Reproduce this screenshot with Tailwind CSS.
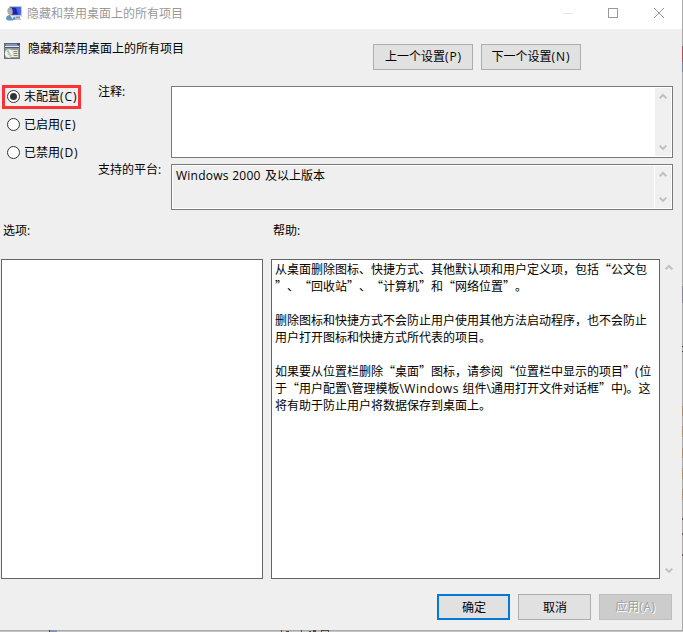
<!DOCTYPE html>
<html lang="zh-CN">
<head>
<meta charset="utf-8">
<title>隐藏和禁用桌面上的所有项目</title>
<script src="https://cdn.jsdelivr.net/npm/@tailwindcss/browser@4"></script>
</head>
<body class="w-[683px] h-[632px] overflow-hidden bg-[#d0d0d0] text-black text-[12px] leading-[17px] font-['Noto_Sans_CJK_SC',sans-serif] [text-spacing-trim:space-all]">
<svg class="hidden">
  <symbol id="up" viewBox="0 0 8 7"><path d="M.7 5.2 4 1.9l3.300 3.300" fill="none" stroke="#bfbfbf" stroke-width="2"/></symbol>
  <symbol id="down" viewBox="0 0 8 7"><path d="M.7 1.6 4 4.900l3.300-3.300" fill="none" stroke="#bfbfbf" stroke-width="2"/></symbol>
</svg>
<div class="flex h-[630px]">
<main class="w-[682px] h-[630px] shrink-0 bg-[#efefef] flex flex-col whitespace-nowrap">
  <header class="h-[29px] shrink-0 bg-white flex items-start">
    <svg class="ml-[5px] mt-[5px] w-[18px] h-[17px] shrink-0" viewBox="0 0 18 17">
      <path d="M4 1h13v10.500H4z" fill="#c3cad4"/><path d="M5 2.300h10.500v7.500H5z" fill="#1722b9"/><path d="M11 2.300h4.500v7.500H13z" fill="#4267ed"/>
      <path d="M11 11.500h4v2h-5z" fill="#8b95a4"/><path d="M9 13.500h7V15H9z" fill="#b9bfc8"/>
      <ellipse cx="5" cy="6" rx="2.600" ry="3.500" fill="#8fb0bd"/><ellipse cx="5.600" cy="7.500" rx="2" ry="2.500" fill="#cfa988"/>
      <path d="M1 14c0-3 1.500-4 4-4s5.500 1.500 5.500 4l-3 1.500H3z" fill="#5d97c8"/><path d="m5 10 2.500 4 1.500-3z" fill="#e7f1f7"/>
    </svg>
    <h1 class="ml-[4px] mt-[4px] text-[#999]">隐藏和禁用桌面上的所有项目</h1>
    <svg class="ml-[380px] mt-[7px] w-[102px] h-[12px]" viewBox="0 0 102 12" fill="none" shape-rendering="crispEdges">
      <path d="M0 6.500h10" stroke="#e9e9e9"/><path d="M45.500 1.500h9v9h-9z" stroke="#999"/><path d="m91 1 10 10M101 1 91 11" stroke="#999" shape-rendering="auto"/>
    </svg>
  </header>

  <section class="h-[57px] shrink-0 flex items-start">
    <svg class="ml-[4px] mt-[14px] w-[16px] h-[16px] shrink-0" viewBox="0 0 16 16">
      <path d="M0 0h16v16H0z" fill="#647276"/><path d="M1 5h14v10H1z" fill="#929c9c"/><path d="M0 0h16v1H0z" fill="#477577"/><path d="M2 1h12v2H2z" fill="#8791bd"/><path d="M13 0h3v2h-3z" fill="#354c9a"/><path d="M1 3h14v1H1z" fill="#e1e4e8"/><path d="M1 4h14v1H1z" fill="#4c5d68"/>
      <circle cx="5" cy="10.500" r="4.200" fill="#f1f3f2"/><path d="M5 10.500 2 8l3-1.500zM5 10.500l3 2-2 2z" fill="#a8ce9b"/><circle cx="5" cy="10.500" r="1" fill="#fff" stroke="#777" stroke-width=".5"/>
      <path d="M8 7h6v7H8z" fill="#f1ead2"/><path d="M9.500 8.500h4M9.500 10.500h4M9.500 12.500h4" stroke="#888a76"/>
    </svg>
    <h2 class="ml-[8px] mt-[10px] w-[345px]">隐藏和禁用桌面上的所有项目</h2>
    <button class="mt-[15px] w-[100px] h-[26px] border border-[#adadad] bg-[#e1e1e1] pb-[2px] pl-px">上一个设置<span class="font-['Open_Sans','Noto_Sans',sans-serif] tracking-[.9px]">(P)</span></button>
    <button class="ml-[8px] mt-[15px] w-[100px] h-[26px] border border-[#adadad] bg-[#e1e1e1] pb-[2px]">下一个设置<span class="font-['Open_Sans','Noto_Sans',sans-serif] tracking-[.9px]">(N)</span></button>
  </section>

  <section class="h-[124px] shrink-0 flex">
    <div class="w-[98px] shrink-0 pl-[2px] -mt-px">
      <label class="flex items-center w-[79px] h-[24px] border-3 border-[#fa3434] pl-[2px]">
        <svg class="w-[13px] h-[13px] shrink-0 -mt-px" viewBox="0 0 13 13"><circle cx="6.500" cy="6.500" r="6" fill="#fff" stroke="#333"/><circle cx="6.500" cy="6.500" r="3.500" fill="#333"/></svg>
        <span class="ml-[4px] -mt-[3px]">未配置<span class="font-['Open_Sans','Noto_Sans',sans-serif] tracking-[.9px]">(C)</span></span>
      </label>
      <label class="mt-[4px] flex items-center h-[24px] pl-[5px]">
        <svg class="w-[13px] h-[13px] shrink-0 -mt-px" viewBox="0 0 13 13"><circle cx="6.500" cy="6.500" r="6" fill="#fff" stroke="#333"/></svg>
        <span class="ml-[4px] -mt-[3px]">已启用<span class="font-['Open_Sans','Noto_Sans',sans-serif] tracking-[.9px]">(E)</span></span>
      </label>
      <label class="mt-[4px] flex items-center h-[24px] pl-[5px]">
        <svg class="w-[13px] h-[13px] shrink-0 -mt-px" viewBox="0 0 13 13"><circle cx="6.500" cy="6.500" r="6" fill="#fff" stroke="#333"/></svg>
        <span class="ml-[4px] -mt-[3px]">已禁用<span class="font-['Open_Sans','Noto_Sans',sans-serif] tracking-[.9px]">(D)</span></span>
      </label>
    </div>
    <div class="w-[73px] shrink-0 -mt-[4px]">
      <div class="h-[78px]">注释<span class="font-['Open_Sans',sans-serif]">:</span></div>
      <div>支持的平台<span class="font-['Open_Sans',sans-serif]">:</span></div>
    </div>
    <div class="w-[502px] shrink-0 flex flex-col gap-[6px]">
      <div class="h-[72px] border border-[#7a7a7a] bg-white p-px flex justify-end">
        <div class="w-[16px] bg-[#f0f0f0] flex flex-col items-center justify-between py-[5px] pr-px"><svg class="w-[8px] h-[7px]"><use href="#up"/></svg><svg class="w-[8px] h-[7px]"><use href="#down"/></svg></div>
      </div>
      <div class="h-[46px] border border-[#7a7a7a] bg-white p-px flex gap-px">
        <div class="flex-1 bg-[#efefef] pl-[3px]"><span class="inline-block w-[89px] font-['Open_Sans','Noto_Sans',sans-serif] tracking-[.25px]">Windows 2000</span>及以上版本</div>
        <div class="w-[16px] bg-[#f0f0f0] flex flex-col items-center justify-between py-[5px] pr-px"><svg class="w-[8px] h-[7px]"><use href="#up"/></svg><svg class="w-[8px] h-[7px]"><use href="#down"/></svg></div>
      </div>
    </div>
  </section>

  <section class="h-[49px] shrink-0 flex pt-[11px] pl-[3px]">
    <div class="w-[270px]">选项<span class="font-['Open_Sans',sans-serif]">:</span></div>
    <div>帮助<span class="font-['Open_Sans',sans-serif]">:</span></div>
  </section>

  <section class="h-[320px] shrink-0 flex pl-px">
    <div class="w-[262px] border border-[#646464] bg-white"></div>
    <div class="ml-[8px] w-[389px] border border-[#646464] bg-white pl-[3px]">
      <p class="h-[17px]">从桌面删除图标、快捷方式、其他默认项和用户定义项，包括“公文包</p>
      <p class="h-[17px]">”、“回收站”、“计算机”和“网络位置”。</p>
      <p class="h-[17px] mt-[17px]">删除图标和快捷方式不会防止用户使用其他方法启动程序，也不会防止</p>
      <p class="h-[17px]">用户打开图标和快捷方式所代表的项目。</p>
      <p class="h-[17px] mt-[17px]">如果要从位置栏删除“桌面”图标，请参阅“位置栏中显示的项目”<span class="font-['Open_Sans','Noto_Sans',sans-serif] tracking-[.6px]">(</span>位</p>
      <p class="h-[17px]">于“用户配置<span class="font-['Open_Sans','Noto_Sans',sans-serif]">\</span>管理模板<span class="font-['Open_Sans','Noto_Sans',sans-serif] tracking-[.5px]">\Windows </span>组件<span class="font-['Open_Sans','Noto_Sans',sans-serif]">\</span>通用打开文件对话框”中<span class="font-['Open_Sans','Noto_Sans',sans-serif]">)</span>。这</p>
      <p class="h-[17px]">将有助于防止用户将数据保存到桌面上。</p>
    </div>
    <div class="w-[17px] flex flex-col items-center justify-between py-[5px]"><svg class="w-[8px] h-[7px]"><use href="#up"/></svg><svg class="w-[8px] h-[7px]"><use href="#down"/></svg></div>
  </section>

  <footer class="flex gap-[8px] pl-[437px] pt-[15px]">
    <button class="w-[73px] h-[26px] border-2 border-[#0078d7] bg-[#e1e1e1] pb-[2px] pl-px">确定</button>
    <button class="w-[73px] h-[26px] border border-[#adadad] bg-[#e1e1e1] pb-[2px] pl-px">取消</button>
    <button class="w-[73px] h-[26px] border border-[#bfbfbf] bg-[#ccc] text-[#a0a0a0] pb-[2px] [text-shadow:1px_1px_0_#fff]" disabled>应用<span class="font-['Open_Sans','Noto_Sans',sans-serif] tracking-[.6px]">(A)</span></button>
  </footer>
</main>
<svg class="w-px h-[630px] shrink-0" viewBox="0 0 1 630" shape-rendering="crispEdges">
  <path d="M0 0h1v630H0z" fill="#a9a9a9"/><path d="M0 46h1v16H0z" fill="#9d5550"/><path d="M0 62h1v10H0z" fill="#7785a0"/><path d="M0 286h1v17H0z" fill="#7b879b"/>
  <path d="M0 346h1v1H0zM0 351h1v1H0z" fill="#333"/><path d="M0 406h1v10H0zM0 426h1v11H0zM0 448h1v10H0zM0 468h1v11H0zM0 489h1v11H0z" fill="#b08d6a"/><path d="M0 518h1v2H0zM0 533h1v2H0zM0 554h1v2H0z" fill="#76543c"/>
</svg>
</div>
<svg class="w-[683px] h-[2px] block" viewBox="0 0 683 2" shape-rendering="crispEdges">
  <path d="M0 0h683v1H0z" fill="#a9a9a9"/><path d="M0 1h683v1H0z" fill="#c5c5c5"/><path d="M49 0h1v2h-1z" fill="#444"/><path d="M50 0h7v2h-7z" fill="#8497af"/>
  <path d="M281 0h1v2h-1zM286 1h3v1h-3zM301 0h1v2h-1zM309 1h2v1h-2zM313 0h3v2h-3zM321 0h8v1h-8zM321 1h1v1h-1zM328 1h1v1h-1z" fill="#55493d"/>
</svg>
</body>
</html>
